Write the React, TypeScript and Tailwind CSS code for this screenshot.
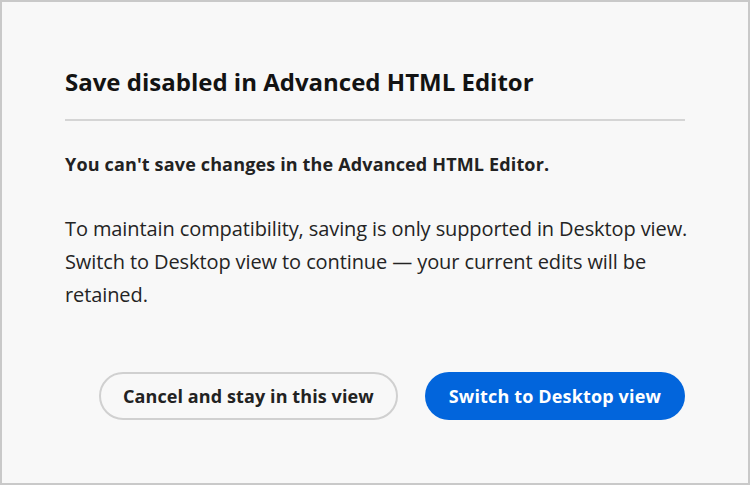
import React from 'react';

export default function App() {
    return (
        <div
            className="w-[750px] h-[485px] bg-[#f8f8f8] border-2 border-[#c9c9c9] text-[#222222] flex flex-col px-[63px] pt-[64px]"
            style={{ fontFamily: '"Open Sans", "Noto Sans", sans-serif' }}
        >
            <h1 className="text-[24px] leading-[32px] font-bold text-[#131313]">
                Save disabled in Advanced HTML Editor
            </h1>
            <div className="mt-[21px] h-[2px] bg-[#d5d5d5]" />
            <p className="mt-[29px] text-[18px] leading-[28px] font-bold tracking-[0.15px]">
                You can't save changes in the Advanced HTML Editor.
            </p>
            <p className="mt-[34px] text-[20px] leading-[33px] text-[#242424] whitespace-nowrap tracking-[-0.1px]">
                To maintain compatibility, saving is only supported in Desktop view.
                <br />
                Switch to Desktop view to continue — your current edits will be
                <br />
                retained.
            </p>
            <div className="mt-[61px] flex justify-end gap-[27px]">
                <button className="h-[48px] px-[22px] rounded-full border-2 border-[#d0d0d0] bg-[#f8f8f8] text-[18px] font-bold text-[#222222] tracking-[0.1px]">
                    Cancel and stay in this view
                </button>
                <button className="h-[48px] px-[24px] rounded-full bg-[#0265dc] text-[18px] font-bold text-white tracking-[0.15px]">
                    Switch to Desktop view
                </button>
            </div>
        </div>
    );
}
